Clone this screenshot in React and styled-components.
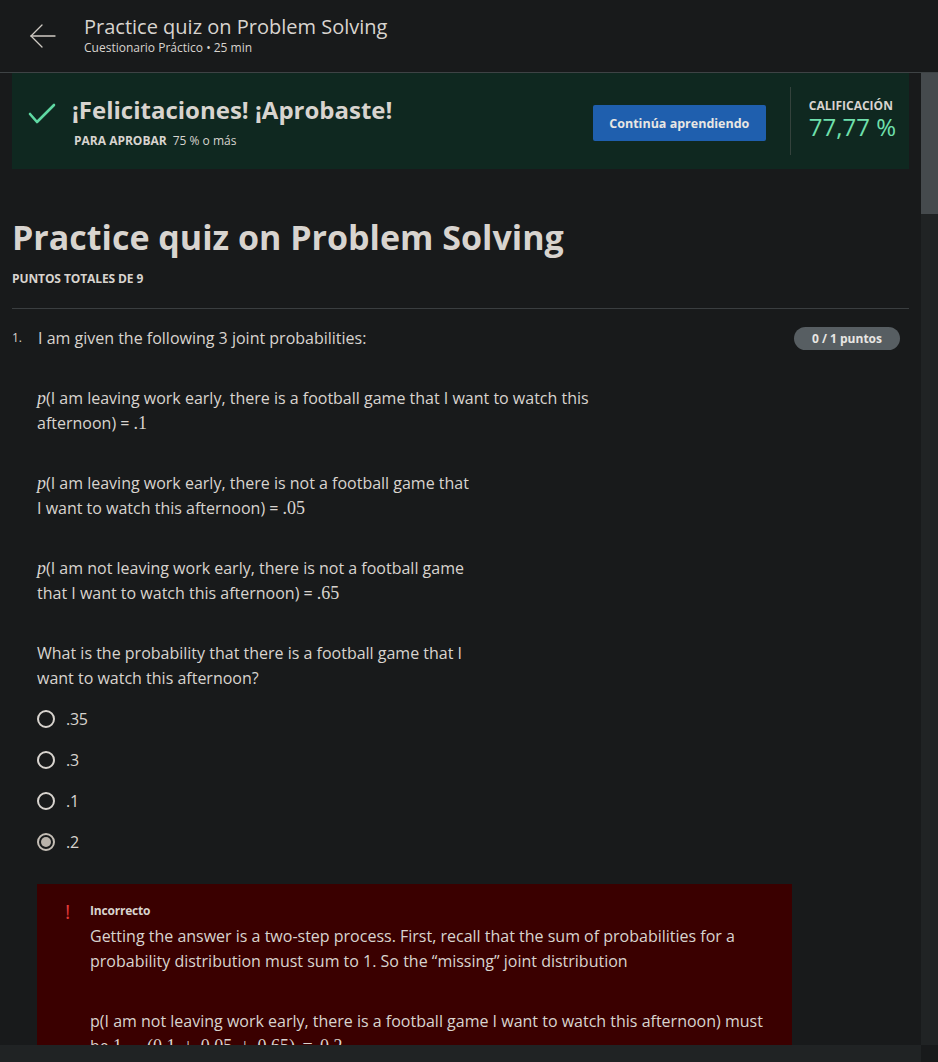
import styled, { createGlobalStyle } from 'styled-components';

const GlobalStyle = createGlobalStyle`
    html, body {
        margin: 0;
        padding: 0;
        background-color: #181a1b;
        overflow: hidden;
    }
    body {
        font-family: "Open Sans", "Noto Sans", sans-serif;
        color: #d8d4cf;
    }
`

const Page = styled.div`
    display: flex;
    flex-direction: column;
    height: 100vh;
`
const Header = styled.header`
    display: flex;
    align-items: center;
    flex-shrink: 0;
    height: 73px;
    border-bottom: 1px solid #3e4345;
    box-sizing: border-box;
`
const BackButton = styled.div`
    width: 84px;
    display: flex;
    justify-content: center;
    padding-left: 1px;
    box-sizing: border-box;
    & > svg {
        display: block;
    }
`
const HeaderText = styled.div`
    display: flex;
    flex-direction: column;
    margin-top: -3px;
`
const HeaderTitle = styled.div`
    font-size: 20px;
    line-height: 26px;
    color: #d8d4cf;
`
const HeaderSub = styled.div`
    font-size: 12px;
    line-height: 16px;
    color: #d8d4cf;
`
/* viewport with its (drawn) scrollbars */
const Viewport = styled.div`
    flex: 1;
    min-height: 0;
    display: grid;
    grid-template-columns: 1fr 17px;
    grid-template-rows: 1fr 17px;
`
const ScrollArea = styled.main`
    overflow: hidden;
    min-height: 0;
`
const VTrack = styled.div`
    background-color: #202324;
`
const VThumb = styled.div`
    height: 141px;
    background-color: #454a4d;
`
const HTrack = styled.div`
    background-color: #202324;
`
const Corner = styled.div`
    background-color: #181a1b;
`
const Content = styled.div`
    padding: 0 12px;
`
const Banner = styled.section`
    display: flex;
    align-items: center;
    height: 96px;
    background-color: #0f2820;
    padding: 0 13px 0 16px;
`
const CheckIcon = styled.div`
    width: 44px;
    flex-shrink: 0;
    margin-top: -14px;
    & > svg {
        display: block;
    }
`
const BannerText = styled.div`
    flex: 1;
    display: flex;
    flex-direction: column;
    margin-top: 1px;
`
const BannerTitle = styled.div`
    font-size: 24px;
    font-weight: 700;
    line-height: 32px;
    color: #d8d4cf;
`
const PassLine = styled.div`
    font-size: 12px;
    line-height: 16px;
    margin-top: 7px;
    padding-left: 2px;
    color: #d8d4cf;
    & > b {
        margin-right: 6px;
    }
`
const PrimaryButton = styled.button`
    height: 36px;
    width: 173px;
    border: none;
    border-radius: 2px;
    background-color: #1f5fae;
    color: #e8e6e3;
    font-family: inherit;
    font-size: 12.5px;
    font-weight: 700;
    margin-right: 24px;
    margin-top: 4px;
    margin-left: 1px;
    padding: 0;
    cursor: pointer;
`
const Divider = styled.div`
    width: 1px;
    height: 68px;
    background-color: #34423c;
`
const Grade = styled.div`
    display: flex;
    flex-direction: column;
    padding-left: 18px;
    margin-top: -3px;
`
const GradeLabel = styled.div`
    font-size: 12px;
    font-weight: 700;
    line-height: 15px;
    color: #d8d4cf;
`
const GradeValue = styled.div`
    font-size: 24px;
    line-height: 28px;
    color: #6fe0ad;
`
const QuizTitle = styled.h1`
    margin: 46px 0 0;
    font-size: 34px;
    line-height: 44px;
    font-weight: 700;
    color: #d8d4cf;
`
const TotalPoints = styled.div`
    margin-top: 12px;
    font-size: 12px;
    font-weight: 700;
    line-height: 16px;
    letter-spacing: -0.1px;
    padding-bottom: 21px;
    border-bottom: 1px solid #3a3e40;
`
const QuestionRow = styled.div`
    display: flex;
    align-items: center;
    margin-top: 17px;
    padding-right: 9px;
`
const QuestionNumber = styled.span`
    width: 26px;
    font-size: 12px;
    line-height: 24px;
`
const QuestionText = styled.span`
    flex: 1;
    font-size: 16px;
    line-height: 24px;
`
const PointsBadge = styled.span`
    height: 23px;
    width: 106px;
    text-align: center;
    border-radius: 12px;
    background-color: #575e62;
    color: #e8e6e3;
    font-size: 12px;
    font-weight: 700;
    line-height: 23px;
`
const Body = styled.div`
    padding-left: 25px;
`
const Para = styled.p`
    margin: ${({ first }) => (first ? '36px' : '35px')} 0 0;
    font-size: 16px;
    line-height: 25px;
    white-space: nowrap;
`
const MathVar = styled.span`
    font-family: "Liberation Serif", "DejaVu Serif", serif;
    font-style: italic;
    font-size: 18px;
`
const MathNum = styled.span`
    font-family: "Liberation Serif", "DejaVu Serif", serif;
    font-size: 18px;
    word-spacing: ${({ wide }) => (wide ? '3px' : '0')};
`
const Options = styled.div`
    display: flex;
    flex-direction: column;
    gap: 16px;
    margin-top: 15px;
`
const Option = styled.label`
    display: flex;
    align-items: center;
    gap: 11px;
    height: 25px;
    font-size: 16px;
    letter-spacing: -0.3px;
`
const Radio = styled.span`
    width: 18px;
    height: 18px;
    border-radius: 50%;
    box-sizing: border-box;
    border: 2px solid ${({ checked }) => (checked ? '#c4beb6' : '#d8d4cf')};
    display: flex;
    align-items: center;
    justify-content: center;
    &::after {
        content: '';
        display: ${({ checked }) => (checked ? 'block' : 'none')};
        width: 10px;
        height: 10px;
        border-radius: 50%;
        background-color: #b9b3ab;
    }
`
const Feedback = styled.div`
    display: flex;
    width: 755px;
    margin-top: 30px;
    padding: 18px 20px 40px 28px;
    box-sizing: border-box;
    background-color: #3a0000;
`
const Alert = styled.div`
    width: 25px;
    color: #e53a3a;
    font-size: 20px;
    font-weight: 400;
    line-height: 20px;
`
const FeedbackBody = styled.div`
    flex: 1;
`
const FeedbackLabel = styled.div`
    font-size: 12px;
    font-weight: 700;
    line-height: 18px;
    letter-spacing: -0.2px;
`
const FeedbackText = styled.p`
    margin: ${({ gap }) => (gap ? '35px' : '4px')} 0 0;
    font-size: 16px;
    line-height: 25px;
    white-space: nowrap;
`

const options = [
    { label: '.35' },
    { label: '.3' },
    { label: '.1' },
    { label: '.2', checked: true },
];

export default function App() {
    return (
        <Page>
            <GlobalStyle />
            <Header>
                <BackButton>
                    <svg width="28" height="26" viewBox="0 0 28 26" fill="none" stroke="#cfcac3" strokeWidth="1.3" strokeLinecap="round">
                        <line x1="2" y1="13" x2="26" y2="13" />
                        <polyline points="13,2 2,13 13,24" />
                    </svg>
                </BackButton>
                <HeaderText>
                    <HeaderTitle>Practice quiz on Problem Solving</HeaderTitle>
                    <HeaderSub>Cuestionario Práctico • 25 min</HeaderSub>
                </HeaderText>
            </Header>
            <Viewport>
                <ScrollArea>
                    <Content>
                        <Banner>
                            <CheckIcon>
                                <svg width="28" height="22" viewBox="0 0 28 22" fill="none" stroke="#5fd9a3" strokeWidth="2.6" strokeLinecap="round" strokeLinejoin="round">
                                    <polyline points="2,11 9,19 26,2" />
                                </svg>
                            </CheckIcon>
                            <BannerText>
                                <BannerTitle>¡Felicitaciones! ¡Aprobaste!</BannerTitle>
                                <PassLine><b>PARA APROBAR</b>75 % o más</PassLine>
                            </BannerText>
                            <PrimaryButton>Continúa aprendiendo</PrimaryButton>
                            <Divider />
                            <Grade>
                                <GradeLabel>CALIFICACIÓN</GradeLabel>
                                <GradeValue>77,77 %</GradeValue>
                            </Grade>
                        </Banner>

                        <QuizTitle>Practice quiz on Problem Solving</QuizTitle>
                        <TotalPoints>PUNTOS TOTALES DE 9</TotalPoints>

                        <QuestionRow>
                            <QuestionNumber>1.</QuestionNumber>
                            <QuestionText>I am given the following 3 joint probabilities:</QuestionText>
                            <PointsBadge>0 / 1 puntos</PointsBadge>
                        </QuestionRow>

                        <Body>
                            <Para first>
                                <MathVar>p</MathVar>(I am leaving work early, there is a football game that I want to watch this<br />
                                afternoon) = <MathNum>.1</MathNum>
                            </Para>
                            <Para>
                                <MathVar>p</MathVar>(I am leaving work early, there is not a football game that<br />
                                I want to watch this afternoon) = <MathNum>.05</MathNum>
                            </Para>
                            <Para>
                                <MathVar>p</MathVar>(I am not leaving work early, there is not a football game<br />
                                that I want to watch this afternoon) = <MathNum>.65</MathNum>
                            </Para>
                            <Para>
                                What is the probability that there is a football game that I<br />
                                want to watch this afternoon?
                            </Para>

                            <Options>
                                {options.map((o) => (
                                    <Option key={o.label}>
                                        <Radio checked={o.checked} />
                                        {o.label}
                                    </Option>
                                ))}
                            </Options>

                            <Feedback>
                                <Alert>!</Alert>
                                <FeedbackBody>
                                    <FeedbackLabel>Incorrecto</FeedbackLabel>
                                    <FeedbackText>
                                        Getting the answer is a two-step process. First, recall that the sum of probabilities for a<br />
                                        probability distribution must sum to 1. So the “missing” joint distribution
                                    </FeedbackText>
                                    <FeedbackText gap>
                                        p(I am not leaving work early, there is a football game I want to watch this afternoon) must<br />
                                        be <MathNum wide>1 − (0.1 + 0.05 + 0.65) = 0.2</MathNum>
                                    </FeedbackText>
                                </FeedbackBody>
                            </Feedback>
                        </Body>
                    </Content>
                </ScrollArea>
                <VTrack>
                    <VThumb />
                </VTrack>
                <HTrack />
                <Corner />
            </Viewport>
        </Page>
    )
}
